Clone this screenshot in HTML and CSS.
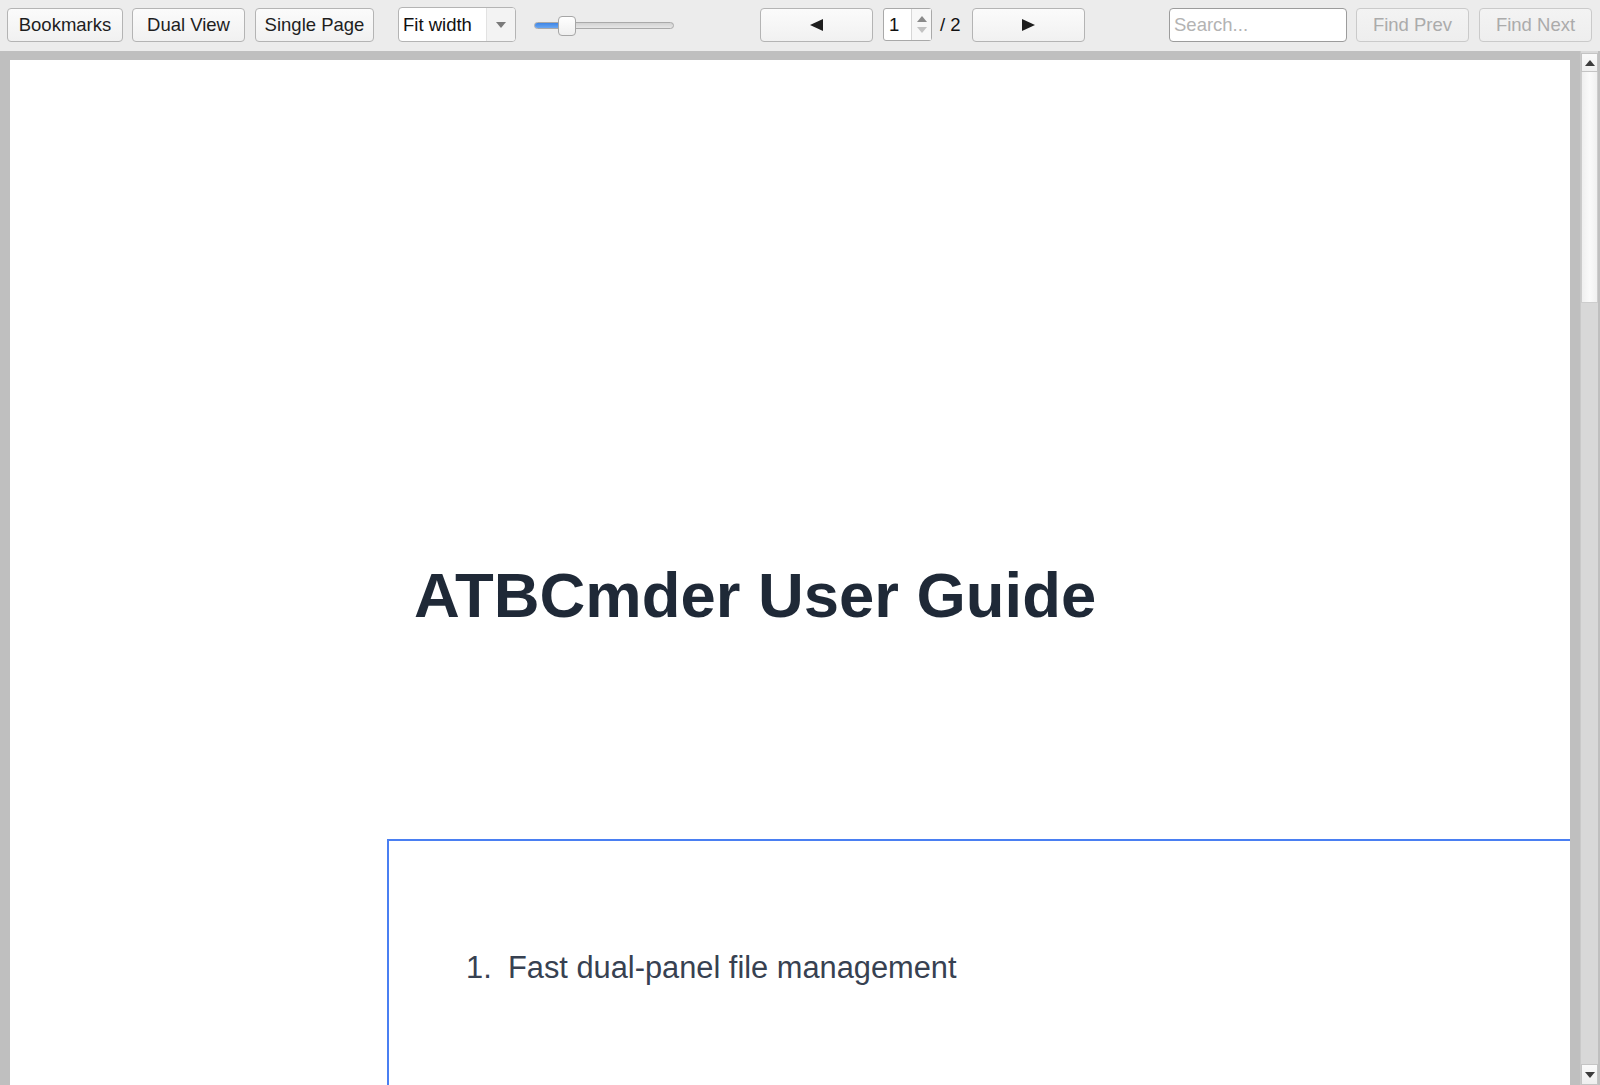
FILE: index.html
```html
<!DOCTYPE html>
<html lang="en">
<head>
<meta charset="utf-8">
<title>ATBCmder User Guide</title>
<link rel="stylesheet" href="styles.css">
</head>
<body>
<div class="app">
  <div class="toolbar">
    <button class="btn btn-bookmarks">Bookmarks</button>
    <button class="btn btn-dual">Dual View</button>
    <button class="btn btn-single">Single Page</button>
    <div class="combo">
      <span class="combo-text">Fit width</span>
      <span class="combo-arrow">
        <svg width="10" height="6" viewBox="0 0 10 6"><path d="M0 0H10L5 6Z" fill="#7a7a7a"/></svg>
      </span>
    </div>
    <div class="slider">
      <div class="slider-track"><div class="slider-fill"></div></div>
      <div class="slider-handle"></div>
    </div>
    <button class="btn btn-nav btn-prev" aria-label="Previous page">
      <svg width="13" height="12" viewBox="0 0 13 12"><path d="M0 6L13 0V12Z" fill="#1e1e1e"/></svg>
    </button>
    <div class="spin">
      <span class="spin-value">1</span>
      <span class="spin-arrows">
        <svg width="10" height="6" viewBox="0 0 10 6"><path d="M5 0L10 6H0Z" fill="#8a8a8a"/></svg>
        <svg width="10" height="6" viewBox="0 0 10 6"><path d="M0 0H10L5 6Z" fill="#c2c2c2"/></svg>
      </span>
    </div>
    <span class="page-total">/ 2</span>
    <button class="btn btn-nav btn-next" aria-label="Next page">
      <svg width="13" height="12" viewBox="0 0 13 12"><path d="M13 6L0 0V12Z" fill="#1e1e1e"/></svg>
    </button>
    <input class="search" type="text" placeholder="Search...">
    <button class="btn btn-find btn-find-prev" disabled>Find Prev</button>
    <button class="btn btn-find btn-find-next" disabled>Find Next</button>
  </div>

  <div class="viewer">
    <div class="canvas">
      <div class="page">
        <h1 class="doc-title">ATBCmder User Guide</h1>
        <div class="feature-box">
          <ol class="features">
            <li><span class="num">1.</span><span class="feature-text">Fast dual-panel file management</span></li>
          </ol>
        </div>
      </div>
    </div>
    <div class="scrollbar">
      <div class="sb-btn sb-up">
        <svg width="10" height="6" viewBox="0 0 10 6"><path d="M5 0L10 6H0Z" fill="#3c3c3c"/></svg>
      </div>
      <div class="sb-thumb"></div>
      <div class="sb-track"></div>
      <div class="sb-btn sb-down">
        <svg width="10" height="6" viewBox="0 0 10 6"><path d="M0 0H10L5 6Z" fill="#3c3c3c"/></svg>
      </div>
    </div>
  </div>
</div>
</body>
</html>
```

FILE: styles.css
```css
* {
  box-sizing: border-box;
}

html, body {
  margin: 0;
  padding: 0;
  width: 1600px;
  height: 1085px;
  overflow: hidden;
  background: #ececec;
}

.app {
  display: flex;
  flex-direction: column;
  height: 1085px;
  font-family: "Liberation Sans", Arial, sans-serif;
}

/* ---------- toolbar ---------- */

.toolbar {
  height: 51px;
  flex: none;
  display: flex;
  align-items: center;
  padding: 0 8px 2px 7px;
  background: #ececec;
  font-size: 18.5px;
  color: #1e1e1e;
}

.btn {
  height: 34px;
  padding: 0;
  border: 1px solid #b4b4b4;
  border-radius: 4px;
  background: linear-gradient(#fbfbfb, #f1f1f1);
  font-family: inherit;
  font-size: 18.5px;
  color: #1e1e1e;
  display: flex;
  align-items: center;
  justify-content: center;
  flex: none;
}

.btn-bookmarks { width: 116px; }
.btn-dual { width: 113px; margin-left: 9px; }
.btn-single { width: 119px; margin-left: 10px; }

.btn-find {
  width: 113px;
  color: #ababab;
  border-color: #cacaca;
  background: linear-gradient(#f3f3f3, #eeeeee);
}
.btn-find-prev { margin-left: 9px; }
.btn-find-next { margin-left: 10px; }

.combo {
  width: 118px;
  height: 35px;
  margin-left: 24px;
  display: flex;
  border: 1px solid #b4b4b4;
  border-radius: 4px;
  background: #fff;
  overflow: hidden;
  flex: none;
}
.combo-text {
  flex: 1;
  display: flex;
  align-items: center;
  padding-left: 4px;
  color: #111;
}
.combo-arrow {
  width: 29px;
  display: flex;
  align-items: center;
  justify-content: center;
  background: #f3f3f3;
  border-left: 1px solid #e2e2e2;
}

.slider {
  position: relative;
  width: 140px;
  height: 20px;
  margin-left: 18px;
  margin-top: 3px;
  flex: none;
}
.slider-track {
  position: absolute;
  left: 0;
  right: 0;
  top: 6px;
  height: 7px;
  border: 1px solid #a9a9a9;
  border-radius: 4px;
  background: linear-gradient(#d2d2d2, #e6e6e6);
  overflow: hidden;
}
.slider-fill {
  width: 28px;
  height: 100%;
  background: linear-gradient(#3f86e6, #6aa6f0);
}
.slider-handle {
  position: absolute;
  left: 24px;
  top: 0;
  width: 18px;
  height: 20px;
  border: 1px solid #a6a6a6;
  border-radius: 4px;
  background: linear-gradient(#ffffff, #efefef);
}

.btn-nav {
  width: 113px;
}
.btn-prev { margin-left: 86px; }
.btn-next { margin-left: 10px; }

.spin {
  width: 49px;
  height: 33px;
  margin-left: 10px;
  display: flex;
  border: 1px solid #a9a9a9;
  border-radius: 3px;
  background: #fff;
  flex: none;
}
.spin-value {
  flex: 1;
  display: flex;
  align-items: center;
  padding-left: 5px;
  color: #111;
}
.spin-arrows {
  width: 20px;
  display: flex;
  flex-direction: column;
  align-items: center;
  justify-content: center;
  gap: 5px;
  border-left: 1px solid #d6d6d6;
  background: #f7f7f7;
}

.page-total {
  margin-left: 8px;
  width: 22px;
  color: #111;
  flex: none;
}

.search {
  width: 178px;
  height: 34px;
  margin-left: 84px;
  padding: 0 4px;
  border: 1px solid #9c9c9c;
  border-radius: 4px;
  background: #fff;
  font-family: inherit;
  font-size: 18.5px;
  color: #111;
  outline: none;
  flex: none;
}
.search::placeholder {
  color: #b3b3b3;
}

/* ---------- document viewer ---------- */

.viewer {
  flex: 1;
  display: flex;
  background: #bfbfbf;
  overflow: hidden;
}

.canvas {
  flex: 1;
  padding: 9px 10px 0 10px;
  overflow: hidden;
}

.page {
  width: 1560px;
  height: 1100px;
  background: #ffffff;
  overflow: hidden;
  padding-top: 497px;
}

.doc-title {
  margin: 0 0 206px 0;
  padding-left: 404px;
  font-size: 63.4px;
  line-height: 76px;
  font-weight: 700;
  color: #1f2937;
  white-space: nowrap;
}

.feature-box {
  width: 1400px;
  height: 600px;
  margin-left: 377px;
  border: 2px solid #4a7ff2;
  padding-top: 109px;
  padding-left: 77px;
}

.features {
  list-style: none;
  margin: 0;
  padding: 0;
}
.features li {
  display: flex;
  font-size: 30.8px;
  line-height: 36px;
  color: #374151;
  white-space: nowrap;
}
.features .num {
  width: 42px;
}

/* ---------- scrollbar ---------- */

.scrollbar {
  width: 18px;
  margin-right: 2px;
  display: flex;
  flex-direction: column;
  background: #d9d9d9;
  border-left: 1px solid #c9c9c9;
}
.sb-btn {
  height: 19px;
  flex: none;
  display: flex;
  align-items: center;
  justify-content: center;
  background: linear-gradient(#fafafa, #efefef);
  border: 1px solid #c4c4c4;
}
.sb-up {
  margin-top: 2px;
}
.sb-down {
  height: 21px;
}
.sb-thumb {
  height: 231px;
  flex: none;
  background: linear-gradient(90deg, #f0f0f0, #fafafa 50%, #f0f0f0);
  border: 1px solid #cdcdcd;
  border-top: none;
}
.sb-track {
  flex: 1;
  background: #d8d8d8;
}
```
